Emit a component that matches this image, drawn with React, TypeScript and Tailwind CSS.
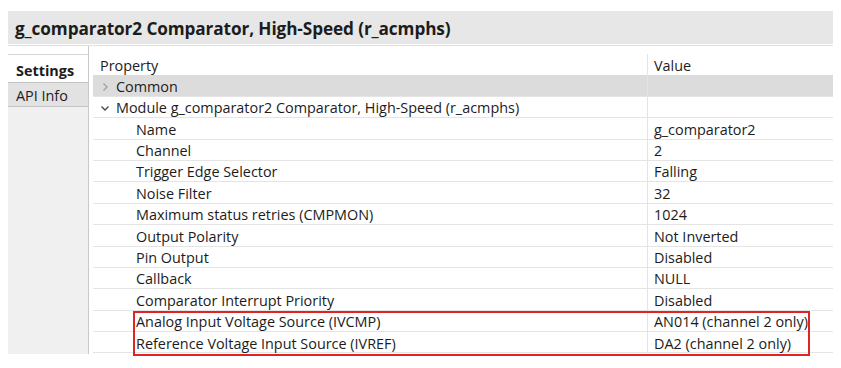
import { ReactNode } from "react";

type Row = { name: string; value: string };

const rows: Row[] = [
  { name: "Name", value: "g_comparator2" },
  { name: "Channel", value: "2" },
  { name: "Trigger Edge Selector", value: "Falling" },
  { name: "Noise Filter", value: "32" },
  { name: "Maximum status retries (CMPMON)", value: "1024" },
  { name: "Output Polarity", value: "Not Inverted" },
  { name: "Pin Output", value: "Disabled" },
  { name: "Callback", value: "NULL" },
  { name: "Comparator Interrupt Priority", value: "Disabled" },
  { name: "Analog Input Voltage Source (IVCMP)", value: "AN014 (channel 2 only)" },
  { name: "Reference Voltage Input Source (IVREF)", value: "DA2 (channel 2 only)" },
];

function Chevron({ open }: { open: boolean }) {
  return open ? (
    <svg width="10" height="10" viewBox="0 0 10 10" className="shrink-0">
      <path d="M1.5 3.5 L5 7 L8.5 3.5" fill="none" stroke="#444" strokeWidth="1.3" />
    </svg>
  ) : (
    <svg width="10" height="10" viewBox="0 0 10 10" className="shrink-0">
      <path d="M3.5 1.5 L7 5 L3.5 8.5" fill="none" stroke="#a0a0a0" strokeWidth="1.3" />
    </svg>
  );
}

function TRow({ left, right, className = "" }: { left: ReactNode; right?: ReactNode; className?: string }) {
  return (
    <div className={`flex h-[21.4px] border-b border-[#e4e4e4] ${className}`}>
      <div className="w-[554px] flex items-center pt-[3px]">{left}</div>
      <div className="flex-1 flex items-center pl-[6px] pt-[3px] border-l border-[#e4e4e4]">{right}</div>
    </div>
  );
}

export default function App() {
  return (
    <div className="w-[841px] h-[368px] bg-white relative text-[#1c1c1c] text-[14.4px] leading-none" style={{ fontFamily: '"Open Sans", "Noto Sans", sans-serif' }}>
      <div className="pt-[11px] pl-[8px] w-[833px]">
        <div className="h-[33px] bg-[#e7e7e7] flex items-center px-[7px] pt-[3px] text-[17.2px] font-bold tracking-[-0.1px]">
          g_comparator2 Comparator, High-Speed (r_acmphs)
        </div>
        <div className="h-[2px] bg-white border-b border-[#e2e2e2]" />
        <div className="flex h-[308px]">
          <div className="w-[81px] bg-[#f0f0f0] border-r border-[#c9c9c9] flex flex-col">
            <div className="h-[9px] bg-white border-b border-[#d4d4d4]" />
            <div className="h-[27px] bg-white flex items-center pl-[8px] pt-[5px] font-bold">Settings</div>
            <div className="h-[25px] bg-[#e2e2e2] border-y border-[#c4c4c4] flex items-center pl-[8px] pt-[4px]">API Info</div>
          </div>
          <div className="flex-1 bg-white pl-[4px] pt-[8px]">
            <div className="w-[740px]">
              <TRow left={<span className="pl-[7px]">Property</span>} right="Value" className="border-b-0" />
              <TRow
                className="bg-[#dcdcdc] border-[#dcdcdc]"
                left={
                  <span className="flex items-center gap-[6px] pl-[7px]">
                    <Chevron open={false} />
                    Common
                  </span>
                }
              />
              <TRow
                left={
                  <span className="flex items-center gap-[6px] pl-[7px]">
                    <Chevron open />
                    Module g_comparator2 Comparator, High-Speed (r_acmphs)
                  </span>
                }
              />
              {rows.map(r => (
                <TRow key={r.name} left={<span className="pl-[43px]">{r.name}</span>} right={r.value} />
              ))}
            </div>
          </div>
        </div>
      </div>
      <div className="absolute left-[133px] top-[311px] w-[677px] h-[45px] border-2 border-[#e02424]" />
    </div>
  );
}
